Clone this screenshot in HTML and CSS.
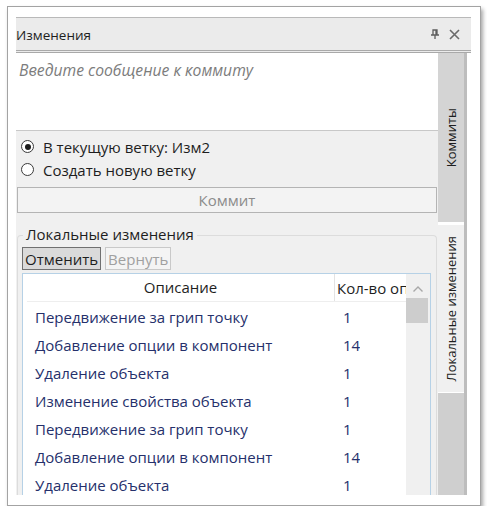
FILE: index.html
```html
<!DOCTYPE html>
<html lang="ru">
<head>
    <meta charset="UTF-8">
    <title>Изменения</title>
    <link rel="stylesheet" href="styles.css">
</head>
<body>
    <div class="frame">
        <div class="panel">
            <!-- Title bar -->
            <div class="titlebar">
                <span class="title">Изменения</span>
                <span class="title-icons">
                    <svg width="10" height="10" viewBox="0 0 10 10"><path d="M3 1h4v5H3zM1 6h8M5 6v4M6 1v5" fill="none" stroke="#5d5d5d" stroke-width="1.3"/></svg>
                    <svg width="11" height="11" viewBox="0 0 11 11"><path d="M1 1l9 9M10 1l-9 9" stroke="#6a6a6a" stroke-width="1.6"/></svg>
                </span>
            </div>
            <div class="content">
                <div class="main">
                    <div class="message">Введите сообщение к коммиту</div>
                    <div class="radios">
                        <label class="radio"><span class="dot checked"></span>В текущую ветку: Изм2</label>
                        <label class="radio"><span class="dot"></span>Создать новую ветку</label>
                    </div>
                    <button class="commit" disabled>Коммит</button>

                    <!-- Local changes -->
                    <div class="group">
                        <span class="group-title">Локальные изменения</span>
                        <div class="actions">
                            <button class="btn pressed">Отменить</button>
                            <button class="btn" disabled>Вернуть</button>
                        </div>
                        <div class="list">
                            <div class="rows">
                                <div class="row head">
                                    <span class="c1">Описание</span>
                                    <span class="c2">Кол-во операций</span>
                                </div>
                                <div class="row"><span class="c1">Передвижение за грип точку</span><span class="c2">1</span></div>
                                <div class="row"><span class="c1">Добавление опции в компонент</span><span class="c2">14</span></div>
                                <div class="row"><span class="c1">Удаление объекта</span><span class="c2">1</span></div>
                                <div class="row"><span class="c1">Изменение свойства объекта</span><span class="c2">1</span></div>
                                <div class="row"><span class="c1">Передвижение за грип точку</span><span class="c2">1</span></div>
                                <div class="row"><span class="c1">Добавление опции в компонент</span><span class="c2">14</span></div>
                                <div class="row"><span class="c1">Удаление объекта</span><span class="c2">1</span></div>
                            </div>
                            <div class="scrollbar">
                                <svg width="12" height="8" viewBox="0 0 12 8"><path d="M1.5 6.5L6 2l4.5 4.5" fill="none" stroke="#a8a8a8" stroke-width="1.4"/></svg>
                                <div class="thumb"></div>
                            </div>
                        </div>
                    </div>
                </div>
                <div class="tabs">
                    <div class="tab"><span>Коммиты</span></div>
                    <div class="tab active"><span>Локальные изменения</span></div>
                    <div class="tab rest"></div>
                </div>
            </div>
        </div>
    </div>
</body>
</html>
```

FILE: styles.css
```css
body {
    margin: 0;
    background: #ffffff;
    font-family: 'Open Sans', 'Noto Sans', sans-serif;
    font-size: 15px;
    color: #1e1e1e;
}
.frame {
    margin: 6px 0 0 7px;
    width: 456px;
    height: 484px;
    padding: 10px 8px 4px 8px;
    border: 1px solid #a3a3a3;
    background: #ffffff;
    box-shadow: 2px 3px 4px rgba(0, 0, 0, 0.35);
}
.panel {
    width: 455px;
    height: 478px;
    display: flex;
    flex-direction: column;
    overflow: hidden;
}
.titlebar {
    height: 32px;
    flex: none;
    background: #ebebeb;
    border-top: 1px solid #b9b9b9;
    border-bottom: 3px double #a9a9a9;
    display: flex;
    align-items: center;
    justify-content: space-between;
}
.title {
    font-size: 13.5px;
    margin-top: 2px;
}
.title-icons {
    display: flex;
    align-items: center;
    gap: 9px;
    margin-right: 11px;
}
.content {
    flex: 1;
    display: flex;
    min-height: 0;
}
.main {
    width: 422px;
    background: #f0f0f0;
    display: flex;
    flex-direction: column;
}
.message {
    height: 78px;
    flex: none;
    background: #ffffff;
    border-bottom: 1px solid #c8c8c8;
    padding: 6px 3px;
    box-sizing: border-box;
    color: #7c7c7c;
    font-style: italic;
    font-size: 15.7px;
}
.radios {
    padding: 4px 0 0 1px;
}
.radio {
    display: flex;
    align-items: center;
    height: 23px;
    gap: 9px;
}
.dot {
    width: 13px;
    height: 13px;
    border: 1px solid #3a3a3a;
    border-radius: 50%;
    background: #ffffff;
    box-sizing: border-box;
    display: flex;
    align-items: center;
    justify-content: center;
    margin-left: 4px;
}
.dot.checked::after {
    content: "";
    width: 6px;
    height: 6px;
    border-radius: 50%;
    background: #1b1b1b;
}
.commit {
    margin: 6px 1px 0 1px;
    height: 26px;
    flex: none;
    border: 1px solid #b4b4b4;
    background: #f3f3f3;
    color: #8c8c8c;
    font: inherit;
}
.group {
    margin: 22px 1px 0 1px;
    flex: 1;
    border: 1px solid #dcdcdc;
    border-bottom: none;
    border-radius: 4px 4px 0 0;
    position: relative;
    padding: 11px 5px 0 4px;
    display: flex;
    flex-direction: column;
    min-height: 0;
}
.group-title {
    position: absolute;
    top: -11px;
    left: 5px;
    padding: 0 3px;
    background: #f0f0f0;
    line-height: 18px;
}
.actions {
    display: flex;
    gap: 4px;
}
.btn {
    height: 23px;
    padding: 0 2px;
    font: inherit;
    line-height: 20px;
    border: 1px solid #c9c9c9;
    background: #f4f4f4;
    color: #a0a0a0;
}
.btn.pressed {
    border-color: #707070;
    background: #dadada;
    color: #1e1e1e;
}
.list {
    margin-top: 3px;
    flex: 1;
    border: 1px solid #b6d1e6;
    border-bottom: none;
    background: #ffffff;
    display: flex;
    min-height: 0;
}
.rows {
    flex: 1;
    padding-left: 4px;
    overflow: hidden;
}
.row {
    display: flex;
    height: 28px;
    align-items: center;
    color: #25306b;
}
.row .c1 {
    width: 308px;
    padding-left: 8px;
    box-sizing: border-box;
    flex: none;
}
.row .c2 {
    padding-left: 8px;
    white-space: nowrap;
    overflow: hidden;
}
.row.head {
    color: #1e1e1e;
    height: 27px;
    border-bottom: 1px solid #eeeeee;
    margin-bottom: 1px;
}
.row.head .c1 {
    text-align: center;
    padding-left: 0;
    border-right: 1px solid #e3e3e3;
    height: 27px;
    line-height: 27px;
}
.row.head .c2 {
    padding-left: 2px;
}
.scrollbar {
    width: 24px;
    background: #f0f0f0;
    display: flex;
    flex-direction: column;
    align-items: center;
}
.scrollbar svg {
    margin: 11px 0 5px;
}
.thumb {
    width: 22px;
    height: 25px;
    background: #cdcdcd;
    margin-left: -2px;
}
.tabs {
    width: 26px;
    border-right: 3px solid #bdbdbd;
    margin-right: 4px;
    display: flex;
    flex-direction: column;
}
.tab {
    height: 169px;
    background: #d4d4d4;
    display: flex;
    align-items: center;
    justify-content: center;
    font-size: 13px;
    margin-bottom: 3px;
}
.tab span {
    writing-mode: vertical-rl;
    transform: rotate(180deg);
}
.tab.active {
    background: #f0f0f0;
    height: 167px;
    margin-bottom: 1px;
}
.tab.rest {
    flex: 1;
    margin-bottom: 0;
    height: auto;
    background: #cfcfcf;
}
```
